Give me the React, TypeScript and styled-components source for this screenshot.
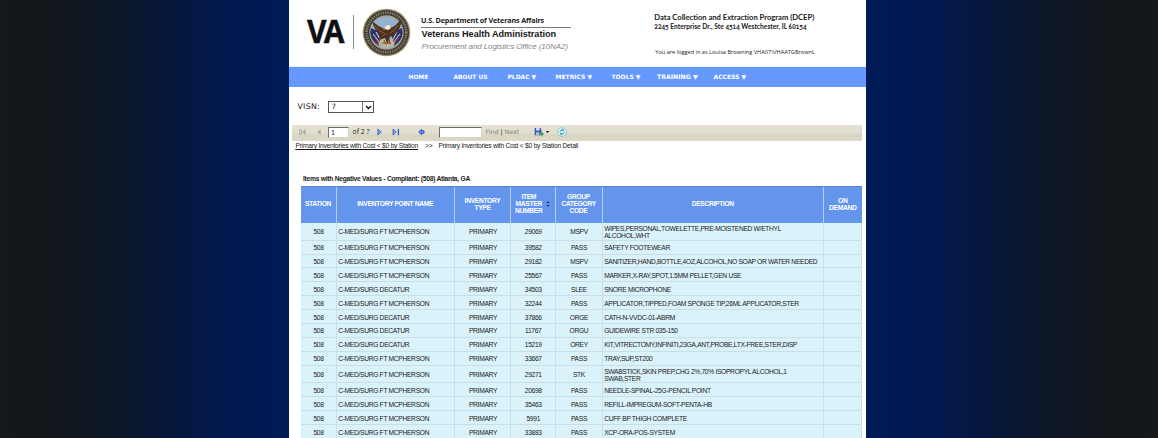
import React from "react";
import styled, { createGlobalStyle } from "styled-components";

const Global = createGlobalStyle`
  html, body { margin: 0; padding: 0; overflow: hidden; }
  * { box-sizing: border-box; }
`;

const Backdrop = styled.div`
  height: 438px;
  overflow: hidden;
  display: flex;
  justify-content: center;
  padding-right: 3px;
  background: linear-gradient(
    90deg,
    #14181b 0, #13171c 55px, #0d1727 110px, #06173a 170px, #02194f 225px, #001a55 275px,
    #001a55 885px, #02194f 935px, #06173a 990px, #0d1727 1050px, #13171c 1105px, #14181b 1158px
  );
`;

const Page = styled.main`
  width: 577px;
  height: 438px;
  background: #fff;
  color: #1a1a1a;
  font-family: "Liberation Sans", Arial, sans-serif;
  overflow: hidden;
  white-space: nowrap;
`;

const Header = styled.header`
  display: flex;
  align-items: flex-start;
  height: 67px;
  border-bottom: 1px solid #e2f6fd;
`;

const VaMark = styled.div`
  width: 46px;
  margin: 10px 0 0 18px;
  font: bold 32px/42px "Open Sans", sans-serif;
  letter-spacing: -3px;
  color: #0e0f12;
  transform: scaleX(0.94);
  transform-origin: left;
  -webkit-text-stroke: 0.4px #0e0f12;
`;

const Divider = styled.div`
  width: 1px;
  height: 34px;
  margin-top: 15px;
  background: #8d8d8d;
`;

const SealSlot = styled.div`
  margin: 8px 0 0 8px;
  height: 49px;
`;

const Titles = styled.div`
  width: 150px;
  margin: 14px 0 0 10px;
`;

const Department = styled.div`
  height: 14px;
  border-bottom: 1px solid #777;
  font: bold 7.2px/12px "Open Sans", sans-serif;
  letter-spacing: -0.15px;
`;

const Administration = styled.div`
  margin: 1px 0 0 0.6px;
  font-size: 9.2px;
  letter-spacing: -0.05px;
  font-weight: bold;
  line-height: 11px;
`;

const Office = styled.div`
  margin: 1px 0 0 0.6px;
  font-size: 8px;
  letter-spacing: -0.09px;
  font-style: italic;
  line-height: 11px;
  color: #858585;
`;

const Program = styled.div`
  margin: 12px 0 0 83.3px;
  font-family: Lato, sans-serif;
  font-weight: bold;
  font-feature-settings: "onum" 1, "liga" 0;
`;

const ProgramName = styled.div`
  font-size: 7.62px;
  line-height: 10px;
`;

const Address = styled.div`
  font-size: 6.66px;
  line-height: 9px;
`;

const Login = styled.div`
  margin: 16px 0 0 1px;
  font: 5.6px/10px "Open Sans", sans-serif;
  color: #222;
`;

const Nav = styled.nav`
  display: grid;
  grid-template-columns: 45px 54px 48px 56px 45.5px 56.5px 1fr;
  height: 20px;
  padding-left: 119.5px;
  background: #6699ff;
`;

const NavItem = styled.a<{ $size?: number }>`
  color: #fff;
  font: bold ${(p) => p.$size ?? 5.95}px/20px "DejaVu Sans", Verdana, sans-serif;
`;

const Visn = styled.div`
  display: flex;
  align-items: center;
  height: 38px;
  padding: 2px 0 0 8.5px;
  font: 7.8px/12px "DejaVu Sans", Verdana, sans-serif;
  letter-spacing: 0.28px;
`;

const Select = styled.div`
  display: flex;
  justify-content: space-between;
  align-items: center;
  width: 46px;
  height: 12px;
  margin-left: 8.5px;
  padding-left: 2px;
  border: 1px solid #555;
  font-size: 7.2px;
`;

const Arrow = styled.span`
  display: flex;
  align-items: center;
  justify-content: center;
  width: 11px;
  height: 10px;
  border-left: 1px solid #777;
`;

const Toolbar = styled.div`
  display: flex;
  align-items: center;
  height: 16px;
  margin: 0 4px 0 3px;
  padding-bottom: 1.5px;
  background: linear-gradient(#e5e2d5, #e1decf 50%, #d8d5c1 62%, #dcd9c7);
`;

const ToolIcon = styled.svg<{ $gap: number }>`
  display: block;
  flex: none;
  margin-left: ${(p) => p.$gap}px;
`;

const Field = styled.div<{ $w: number; $gap: number }>`
  width: ${(p) => p.$w}px;
  height: 11px;
  margin-left: ${(p) => p.$gap}px;
  padding-left: 2px;
  border: 1px solid #d5d2c6;
  border-top-color: #6d6d6d;
  border-left-color: #6d6d6d;
  background: #fff;
  font: 6.4px/10px "DejaVu Sans", Verdana, sans-serif;
`;

const ToolText = styled.span<{ $gap: number; $link?: boolean }>`
  width: ${(p) => (p.$link ? "auto" : "18px")};
  margin-left: ${(p) => p.$gap}px;
  font: ${(p) => (p.$link ? '6.3px/12px "DejaVu Sans"' : '6.9px/12px "Open Sans"')}, sans-serif;
  color: ${(p) => (p.$link ? "#858379" : "#222")};
  i { font-style: normal; color: #222; }
`;

const Crumbs = styled.div`
  display: flex;
  padding-left: 6.5px;
  font-size: 6.7px;
  letter-spacing: -0.25px;
  line-height: 10px;
`;

const CrumbLink = styled.span`
  width: 129.5px;
  text-decoration: underline;
  text-underline-offset: 1px;
  text-decoration-thickness: 1px;
`;

const CrumbSep = styled.span`
  width: 13.5px;
`;

const ReportTitle = styled.h1`
  margin: 22.5px 0 2.5px 14px;
  font-size: 6.7px;
  letter-spacing: -0.26px;
  line-height: 10px;
  font-weight: bold;
`;

const Table = styled.div`
  margin-left: 11.5px;
  width: 561px;
  font-size: 6.7px;
  letter-spacing: -0.32px;
  line-height: 7px;
`;

const Row = styled.div<{ $tall?: boolean }>`
  display: grid;
  grid-template-columns: 36px 118.5px 56px 44.5px 47px 221.5px 37.5px;
  height: ${(p) => (p.$tall ? 17.6 : 13.92)}px;
`;

const HeadRow = styled(Row)`
  height: 37px;
  background: #6495ed;
  border-top: 1px solid #5a82cc;
  color: #fff;
  font-weight: bold;
`;

const Cell = styled.div<{ $left?: boolean }>`
  display: flex;
  align-items: center;
  justify-content: ${(p) => (p.$left ? "flex-start" : "center")};
  padding-left: ${(p) => (p.$left ? 1.7 : 1)}px;
  padding-top: 1px;
  white-space: pre;
  background: #daf2fa;
  border-right: 1px solid #c8dfe7;
  border-bottom: 1px solid #c8dfe7;
`;

const HeadCell = styled.div`
  display: flex;
  align-items: center;
  justify-content: center;
  gap: 4px;
  padding-bottom: 3px;
  text-align: center;
  white-space: pre;
  border-right: 1px solid #b9cdf3;
  &:last-child { border-right: 0; }
`;

const SealArt = styled.svg`
  display: block;
`;

function Seal() {
  return (
    <SealArt width="49" height="49" viewBox="0 0 49 49">
      <circle cx="24.5" cy="24.5" r="23.8" fill="#a3925f" />
      <circle cx="24.5" cy="24.5" r="22.5" fill="#3c3c40" />
      <circle cx="24.5" cy="24.5" r="19.8" fill="none" stroke="#8f8260" strokeWidth="2.4" strokeDasharray="1.3 1.1" />
      <circle cx="24.5" cy="24.5" r="17.2" fill="#b39a62" />
      <circle cx="24.5" cy="24.5" r="16.3" fill="#93b2cf" />
      <path d="M9 20 L20 25 L17 38 Q9 33 8.3 25Z" fill="#2c3569" />
      <path d="M40 20 L29 25 L32 38 Q40 33 40.7 25Z" fill="#2c3569" />
      <path d="M11 26l7 9M14 24l5 9M38 26l-7 9M35 24l-5 9" stroke="#e8dfe0" strokeWidth="1" />
      <path d="M13 30l5 7M36 30l-5 7" stroke="#a23a3c" strokeWidth="1.2" />
      <path d="M16 36 Q24.5 43 33 36 L30 31 H19Z" fill="#c3b493" />
      <path d="M10 13 Q12 22 18 26 L17 32 L23 30 L25.5 36 L28 29 Q34 27 37 21 Q40 16 39 11 Q34 18 28.5 20 L26.5 17.5 L22.5 21 Q16 18.5 10 13Z" fill="#50301f" />
      <path d="M13 18 Q17 24 22 25M36 17 Q33 23 28 25M21 28l3-3" fill="none" stroke="#916442" strokeWidth=".9" />
      <path d="M22.5 20 Q25 15.5 28.4 18 L28.5 21 L25 22Z" fill="#f0ead8" />
      <path d="M22.8 20l-2 1.4 2.7.3Z" fill="#d5a13a" />
      <path d="M22 32l2.5 5M27 31l1 5M20 35h9" stroke="#6b4d34" strokeWidth="1" />
    </SealArt>
  );
}

const NAV: [string, number?][] = [
  ["HOME", 5.85], ["ABOUT US", 5.9], ["PLDAC ▼"], ["METRICS ▼", 6], ["TOOLS ▼"], ["TRAINING ▼", 6.2], ["ACCESS ▼", 6],
];

const FT = "C-MED/SURG FT MCPHERSON";
const DEC = "C-MED/SURG DECATUR";

const ROWS: [string, string, string, string][] = [
  [FT, "29069", "MSPV", "WIPES,PERSONAL,TOWELETTE,PRE-MOISTENED W/ETHYL\nALCOHOL,WHT"],
  [FT, "39582", "PASS", "SAFETY FOOTEWEAR"],
  [FT, "29182", "MSPV", "SANITIZER,HAND,BOTTLE,4OZ,ALCOHOL,NO SOAP OR WATER NEEDED"],
  [FT, "25567", "PASS", "MARKER,X-RAY,SPOT,1.5MM PELLET,GEN USE"],
  [DEC, "34503", "SLEE", "SNORE MICROPHONE"],
  [FT, "32244", "PASS", "APPLICATOR,TIPPED,FOAM SPONGE TIP,26ML APPLICATOR,STER"],
  [DEC, "37866", "ORGE", "CATH-N-VVDC-01-ABRM"],
  [DEC, "11767", "ORGU", "GUIDEWIRE STR 035-150"],
  [DEC, "15219", "OREY", "KIT,VITRECTOMY,INFINITI,23GA,ANT,PROBE,LTX-FREE,STER,DISP"],
  [FT, "33667", "PASS", "TRAY,SUP,ST200"],
  [FT, "29271", "STK", "SWABSTICK,SKIN PREP,CHG 2%,70% ISOPROPYL ALCOHOL,1\nSWAB,STER"],
  [FT, "20698", "PASS", "NEEDLE-SPINAL-25G-PENCIL POINT"],
  [FT, "35463", "PASS", "REFILL-IMPREGUM-SOFT-PENTA-HB"],
  [FT, "5991", "PASS", "CUFF BP THIGH COMPLETE"],
  [FT, "33883", "PASS", "XCP-ORA-POS-SYSTEM"],
];

export default function App() {
  return (
    <Backdrop>
      <Global />
      <Page>
        <Header>
          <VaMark>VA</VaMark>
          <Divider />
          <SealSlot><Seal /></SealSlot>
          <Titles>
            <Department>U.S. Department of Veterans Affairs</Department>
            <Administration>Veterans Health Administration</Administration>
            <Office>Procurement and Logistics Office (10NA2)</Office>
          </Titles>
          <Program>
            <ProgramName>Data Collection and Extraction Program (DCEP)</ProgramName>
            <Address>2245 Enterprise Dr., Ste 4514 Westchester, IL 60154</Address>
            <Login>You are logged in as Louisa Browning VHA07\VHAATGBrownL</Login>
          </Program>
        </Header>
        <Nav>
          {NAV.map(([label, size]) => <NavItem key={label} $size={size}>{label}</NavItem>)}
        </Nav>
        <Visn>
          VISN:
          <Select>
            7
            <Arrow>
              <svg width="7" height="5" viewBox="0 0 7 5"><path d="M1 1l2.5 2.5L6 1" fill="none" stroke="#111" strokeWidth="1.4" /></svg>
            </Arrow>
          </Select>
        </Visn>
        <Toolbar>
          <ToolIcon $gap={7} width="7" height="8" viewBox="0 0 7 8"><path d="M.7 1v6M2.4 1v6" stroke="#a7a69f" strokeWidth=".9" /><path d="M6.5 1v6L3.3 4Z" fill="#a7a69f" /></ToolIcon>
          <ToolIcon $gap={11} width="4" height="8" viewBox="0 0 4 8"><path d="M3.7 1v6L.4 4Z" fill="#a7a69f" /></ToolIcon>
          <Field $w={21} $gap={7}>1</Field>
          <ToolText $gap={3.5}>of 2 ?</ToolText>
          <ToolIcon $gap={6} width="5" height="8" viewBox="0 0 5 8"><path d="M.8 1v6L4.3 4Z" fill="#86a7ec" stroke="#3059c4" strokeWidth=".8" /></ToolIcon>
          <ToolIcon $gap={10} width="8" height="8" viewBox="0 0 8 8"><path d="M1 1v6L4.3 4Z" fill="#86a7ec" stroke="#3059c4" strokeWidth=".8" /><path d="M6.4 .8v6.4" stroke="#3059c4" strokeWidth="1.3" /></ToolIcon>
          <ToolIcon $gap={18} width="7" height="8" viewBox="0 0 7 8"><path d="M.7 4L3.5 1.2v1.6H6v2.4H3.5v1.6Z" fill="#6a8de6" stroke="#2b50bd" strokeWidth=".9" /></ToolIcon>
          <Field $w={43} $gap={14.5} />
          <ToolText $gap={3.5} $link>Find <i>|</i> Next</ToolText>
          <ToolIcon $gap={14.5} width="16" height="10" viewBox="0 0 16 10">
            <path d="M.7 1h5.6l1 1v6.3H.7Z" fill="#3b55b5" />
            <path d="M2.2 1h3.3v2.6H2.2Z" fill="#dfe7fa" />
            <path d="M2 5.2h3.4v3H2Z" fill="#aebee9" />
            <path d="M5 6h2.3V4.4L10 7 7.3 9.6V8H5Z" fill="#3f9d4c" />
            <path d="M11.8 4h3.4l-1.7 2Z" fill="#111" />
          </ToolIcon>
          <ToolIcon $gap={7.5} width="10" height="10" viewBox="0 0 10 10">
            <circle cx="5" cy="5" r="4.4" fill="#e5f5f7" stroke="#77c1d3" strokeWidth=".8" />
            <path d="M2.8 5A2.3 2.3 0 0 1 6 3M7.2 5A2.3 2.3 0 0 1 4 7" fill="none" stroke="#219aae" strokeWidth="1" />
            <path d="M5.6 1.5L7.5 3.4 5.2 4.2ZM4.4 8.5L2.5 6.6 4.8 5.8Z" fill="#219aae" />
          </ToolIcon>
        </Toolbar>
        <Crumbs>
          <CrumbLink><u>Primary Inventories with Cost &lt; $0 by Station</u></CrumbLink>
          <CrumbSep>&gt;&gt;</CrumbSep>
          <span>Primary Inventories with Cost &lt; $0 by Station Detail</span>
        </Crumbs>
        <ReportTitle>Items with Negative Values - Compliant: (508) Atlanta, GA</ReportTitle>
        <Table>
          <HeadRow>
            <HeadCell>STATION</HeadCell>
            <HeadCell>INVENTORY POINT NAME</HeadCell>
            <HeadCell>{"INVENTORY\nTYPE"}</HeadCell>
            <HeadCell>
              {"ITEM\nMASTER\nNUMBER"}
              <svg width="4" height="6" viewBox="0 0 4 6"><path d="M.2 2L2 .2 3.8 2ZM.2 4L2 5.8 3.8 4Z" fill="#1d2c55" /></svg>
            </HeadCell>
            <HeadCell>{"GROUP\nCATEGORY\nCODE"}</HeadCell>
            <HeadCell>DESCRIPTION</HeadCell>
            <HeadCell>{"ON\nDEMAND"}</HeadCell>
          </HeadRow>
          {ROWS.map(([point, item, group, text]) => (
            <Row key={item} $tall={text.includes("\n")}>
              <Cell>508</Cell>
              <Cell $left>{point}</Cell>
              <Cell>PRIMARY</Cell>
              <Cell>{item}</Cell>
              <Cell>{group}</Cell>
              <Cell $left>{text}</Cell>
              <Cell />
            </Row>
          ))}
        </Table>
      </Page>
    </Backdrop>
  );
}
